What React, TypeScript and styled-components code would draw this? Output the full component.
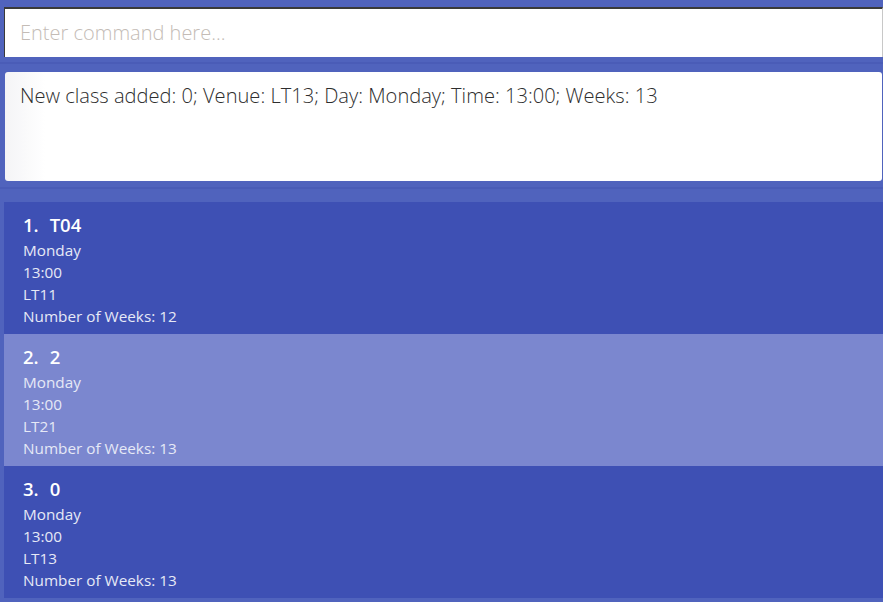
import React from "react";
import styled, { createGlobalStyle } from "styled-components";

const Global = createGlobalStyle`
  html, body { margin: 0; padding: 0; background: #5063bd; }
  body { font-family: "Open Sans", "Noto Sans", sans-serif; overflow: hidden; }
  * { box-sizing: border-box; }
`;

const Page = styled.div`
  width: 883px;
  height: 602px;
  display: flex;
  flex-direction: column;
  background: #5063bd;
`;

const CommandBar = styled.div`
  padding: 7px 0 0 4px;
`;

const CommandInput = styled.input`
  display: block;
  width: 879px;
  height: 50px;
  border: none;
  border-top: 2px solid #3a3a3a;
  border-left: 1px solid #3a3a3a;
  border-right: 1px solid #c8c8c8;
  background: #fff;
  padding: 0 0 2px 15px;
  font-family: "Open Sans", sans-serif;
  font-size: 20px;
  font-weight: 300;
  color: #333;
  outline: none;
  &::placeholder { color: #c4bcb6; }
`;

const Divider = styled.div<{ $top: number; $bottom: number }>`
  margin-top: ${(p) => p.$top}px;
  margin-bottom: ${(p) => p.$bottom}px;
  height: 2px;
  background: #4a5cb7;
`;

const ResultBox = styled.div`
  margin-left: 5px;
  width: 877px;
  height: 109px;
  background: linear-gradient(to right, #f4f4f6 0px, #fff 40px);
  border-radius: 3px;
  padding: 10px 15px;
  font-size: 20.1px;
  font-weight: 300;
  color: #2e2e2e;
`;

const List = styled.div`
  margin-left: 4px;
  display: flex;
  flex-direction: column;
`;

const Cell = styled.div<{ $selected?: boolean }>`
  height: 132px;
  background: ${(p) => (p.$selected ? "#7b87cf" : "#3e50b4")};
  padding: 10px 19px;
  display: flex;
  flex-direction: column;
`;

const Title = styled.div`
  display: flex;
  gap: 11px;
  font-size: 18.5px;
  font-weight: 600;
  color: #fff;
  line-height: 25px;
  margin-bottom: 2px;
`;

const Detail = styled.div`
  font-size: 15.3px;
  color: #e6e9f6;
  line-height: 22px;
`;

const classes = [
  { id: "T04", day: "Monday", time: "13:00", venue: "LT11", weeks: 12 },
  { id: "2", day: "Monday", time: "13:00", venue: "LT21", weeks: 13, selected: true },
  { id: "0", day: "Monday", time: "13:00", venue: "LT13", weeks: 13 },
];

export default function App() {
  return (
    <Page>
      <Global />
      <CommandBar>
        <CommandInput placeholder="Enter command here..." />
      </CommandBar>
      <Divider $top={5} $bottom={8} />
      <ResultBox>New class added: 0; Venue: LT13; Day: Monday; Time: 13:00; Weeks: 13</ResultBox>
      <Divider $top={6} $bottom={13} />
      <List>
        {classes.map((c, i) => (
          <Cell key={c.id} $selected={c.selected}>
            <Title>
              <span>{i + 1}.</span>
              <span>{c.id}</span>
            </Title>
            <Detail>{c.day}</Detail>
            <Detail>{c.time}</Detail>
            <Detail>{c.venue}</Detail>
            <Detail>Number of Weeks: {c.weeks}</Detail>
          </Cell>
        ))}
      </List>
    </Page>
  );
}
